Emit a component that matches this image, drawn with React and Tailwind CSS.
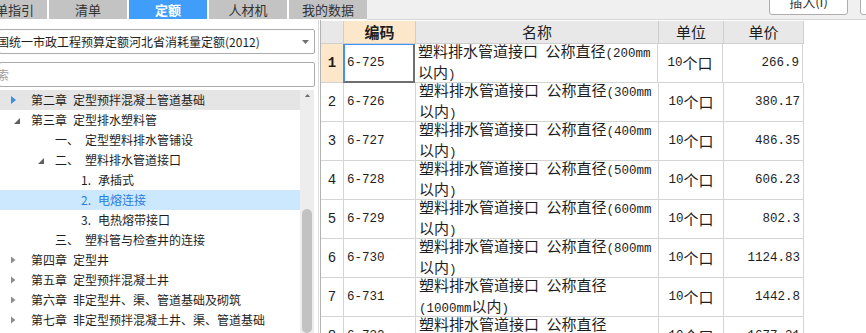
import React from "react";

const tabs = ["清单指引", "清单", "定额", "人材机", "我的数据"];

const tree = [
  { lvl: "chapter", icon: "blue", prefix: "第二章", text: "定型预拌混凝土管道基础", hover: true },
  { lvl: "chapter", icon: "open", prefix: "第三章", text: "定型排水塑料管" },
  { lvl: "sub", prefix: "一、", text: "定型塑料排水管铺设" },
  { lvl: "sub", icon: "open", prefix: "二、", text: "塑料排水管道接口" },
  { lvl: "item", prefix: "1.", text: "承插式" },
  { lvl: "item", prefix: "2.", text: "电熔连接", selected: true },
  { lvl: "item", prefix: "3.", text: "电热熔带接口" },
  { lvl: "sub", prefix: "三、", text: "塑料管与检查井的连接" },
  { lvl: "chapter", icon: "closed", prefix: "第四章", text: "定型井" },
  { lvl: "chapter", icon: "closed", prefix: "第五章", text: "定型预拌混凝土井" },
  { lvl: "chapter", icon: "closed", prefix: "第六章", text: "非定型井、渠、管道基础及砌筑" },
  { lvl: "chapter", icon: "closed", prefix: "第七章", text: "非定型预拌混凝土井、渠、管道基础" },
];

const rows = [
  { no: 1, code: "6-725", name: ["塑料排水管道接口 公称直径(200mm", "以内)"], price: "266.9" },
  { no: 2, code: "6-726", name: ["塑料排水管道接口 公称直径(300mm", "以内)"], price: "380.17" },
  { no: 3, code: "6-727", name: ["塑料排水管道接口 公称直径(400mm", "以内)"], price: "486.35" },
  { no: 4, code: "6-728", name: ["塑料排水管道接口 公称直径(500mm", "以内)"], price: "606.23" },
  { no: 5, code: "6-729", name: ["塑料排水管道接口 公称直径(600mm", "以内)"], price: "802.3" },
  { no: 6, code: "6-730", name: ["塑料排水管道接口 公称直径(800mm", "以内)"], price: "1124.83" },
  { no: 7, code: "6-731", name: ["塑料排水管道接口 公称直径", "(1000mm以内)"], price: "1442.8" },
  { no: 8, code: "6-732", name: ["塑料排水管道接口 公称直径", "(1200mm以内)"], price: "1677.31" },
];

// ASCII runs get the narrow mono font, like the half-width glyphs of the original
const Mixed = ({ text }) =>
  text
    .split(/([\x20-\x7e]+)/)
    .filter(Boolean)
    .map((part, i) =>
      /^[\x20-\x7e]+$/.test(part) ? (
        <span key={i} className="whitespace-pre font-['Liberation_Mono',monospace] text-[12.5px]">
          {part}
        </span>
      ) : (
        <span key={i}>{part}</span>
      )
    );

const TreeIcon = ({ type }) => {
  if (type === "blue")
    return (
      <svg width="5" height="8" viewBox="0 0 5 8" className="ml-px">
        <path d="M0 0 L5 4 L0 8 Z" fill="#3b8de0" />
      </svg>
    );
  if (type === "closed")
    return (
      <svg width="5" height="8" viewBox="0 0 5 8" className="ml-px">
        <path d="M0 0.5 L4.5 4 L0 7.5 Z" fill="#8e8e8e" />
      </svg>
    );
  if (type === "open")
    return (
      <svg width="6" height="6" viewBox="0 0 6 6" className="mt-[2px]">
        <path d="M6 0 L6 6 L0 6 Z" fill="#5f5f5f" />
      </svg>
    );
  return null;
};

const TreeRow = ({ node }) => {
  let bg = "";
  if (node.hover) bg = "bg-[#e5e5e5]";
  if (node.selected) bg = "bg-[#cce8ff] text-[#2a7de1]";

  return (
    <div className={`h-5 flex items-center whitespace-nowrap ${bg}`}>
      {node.lvl === "chapter" && (
        <>
          <div className={`w-[21px] ml-[10px] flex items-center ${node.icon === "open" ? "pl-[4px]" : ""}`}>
            <TreeIcon type={node.icon} />
          </div>
          <span className="w-[42px]">{node.prefix}</span>
        </>
      )}
      {node.lvl === "sub" && (
        <>
          <div className="w-[19px] ml-[36px] flex items-center pl-[2px]">
            <TreeIcon type={node.icon} />
          </div>
          <span className="w-[30px]">{node.prefix}</span>
        </>
      )}
      {node.lvl === "item" && <span className="w-[17px] ml-[81px]">{node.prefix}</span>}
      <span>{node.text}</span>
    </div>
  );
};

const App = () => {
  return (
    <div className="w-[866px] h-[333px] overflow-hidden bg-white text-[#1e1e1e] font-['Noto_Sans_CJK_SC','Liberation_Sans',sans-serif]">
      {/* 顶部页签 */}
      <div className="flex h-5">
        <div className="flex gap-[2px] -ml-[31px] shrink-0 bg-white">
          {tabs.map((t) => (
            <div
              key={t}
              className={`h-[19px] w-[78px] flex items-center justify-center text-[13px] ${
                t === "定额" ? "bg-[#409dfa] text-white font-bold" : "bg-[#c3c3c3] text-[#333]"
              }`}
            >
              {t}
            </div>
          ))}
        </div>
        <div className="flex-1 bg-[#f0f0f0] border-b border-[#d6d6d6] flex justify-end items-start gap-3 -mr-[73px]">
          <button className="h-[27px] -mt-[12px] w-[79px] shrink-0 bg-white border border-[#adadad] rounded-[3px] text-[13px] text-[#333]">
            插入(I)
          </button>
          <button className="h-[27px] -mt-[12px] w-[79px] shrink-0 bg-white border border-[#adadad] rounded-[3px] text-[13px] text-[#333]">
            替换(R)
          </button>
        </div>
      </div>

      <div className="flex">
        {/* 左侧定额树 */}
        <div className="w-[319px] shrink-0 border-r border-[#dadada] flex flex-col h-[313px]">
          <div className="mt-[9px] -ml-px w-[316px] h-[25px] border border-[#ababab] rounded-[2px] flex items-center overflow-hidden">
            <span className="-ml-[15px] text-[12px] whitespace-nowrap">全国统一市政工程预算定额河北省消耗量定额(2012)</span>
            <svg width="7" height="4" viewBox="0 0 7 4" className="ml-auto mr-[5px]">
              <path d="M0 0 L7 0 L3.5 4 Z" fill="#707070" />
            </svg>
          </div>
          <div className="mt-[8px] -ml-px w-[316px] h-[25px] border border-[#ababab] rounded-[2px] flex items-center overflow-hidden">
            <span className="-ml-[15px] text-[12px] text-[#a0a0a0] whitespace-nowrap">搜索</span>
          </div>
          <div className="mt-[3px] flex flex-1 overflow-hidden">
            <div className="w-[300px] text-[12px]">
              {tree.map((n) => (
                <TreeRow key={n.prefix + n.text} node={n} />
              ))}
            </div>
            <div className="w-[14px] bg-[#ededed] flex flex-col items-center">
              <svg width="7" height="4" viewBox="0 0 7 4" className="mt-[4px]">
                <path d="M0 4 L7 4 L3.5 0 Z" fill="#6e6e6e" />
              </svg>
              <div className="mt-[112px] w-[10px] h-[160px] rounded-full bg-[#c2c2c2]" />
            </div>
          </div>
        </div>

        {/* 右侧定额列表 */}
        <div className="w-px shrink-0 bg-white" />
        <div className="flex-1 border-l border-[#b3b3b3] pt-px text-[15px]">
          <div className="flex h-[23px]">
            <div className="w-[23px] bg-[#e8e8e8] border-r border-b border-[#cfcfcf]" />
            <div className="w-[72px] bg-[#fde7cb] border-r border-b border-[#cfcfcf] flex items-center justify-center font-bold">
              编码
            </div>
            <div className="w-[243px] bg-[#e8e8e8] border-r border-b border-[#cfcfcf] flex items-center justify-center">
              名称
            </div>
            <div className="w-[65px] bg-[#e8e8e8] border-r border-b border-[#cfcfcf] flex items-center justify-center">
              单位
            </div>
            <div className="w-[80px] bg-[#e8e8e8] border-r border-b border-[#cfcfcf] flex items-center justify-center">
              单价
            </div>
          </div>
          {rows.map((r) => (
            <div key={r.no} className="flex h-[39px]">
              <div
                className={`w-[23px] border-r border-b border-[#d4d4d4] flex items-center justify-center font-['Liberation_Mono',monospace] text-[14px] ${
                  r.no === 1 ? "bg-[#fde7cb] font-bold" : ""
                }`}
              >
                {r.no}
              </div>
              <div
                className={`w-[72px] flex items-center font-['Liberation_Mono',monospace] text-[12.5px] ${
                  r.no === 1
                    ? "border-l-2 border-t border-r-2 border-b-2 border-l-[#3f93f5] border-t-[#3f93f5] border-r-[#6f6f6f] border-b-[#6f6f6f] -ml-px pl-[2px]"
                    : "border-r border-b border-[#d4d4d4] pl-[3px]"
                }`}
              >
                {r.code}
              </div>
              <div className="w-[243px] border-r border-b border-[#d4d4d4] flex flex-col justify-center pl-[3px] leading-[18px] whitespace-nowrap overflow-hidden">
                <div>
                  <Mixed text={r.name[0]} />
                </div>
                <div>
                  <Mixed text={r.name[1]} />
                </div>
              </div>
              <div className="w-[65px] border-r border-b border-[#d4d4d4] flex items-center justify-center">
                <Mixed text="10个口" />
              </div>
              <div className="w-[80px] border-r border-b border-[#d4d4d4] flex items-center justify-end pr-[3px] font-['Liberation_Mono',monospace] text-[12.5px]">
                {r.price}
              </div>
            </div>
          ))}
        </div>
      </div>
    </div>
  );
};

export default App;
